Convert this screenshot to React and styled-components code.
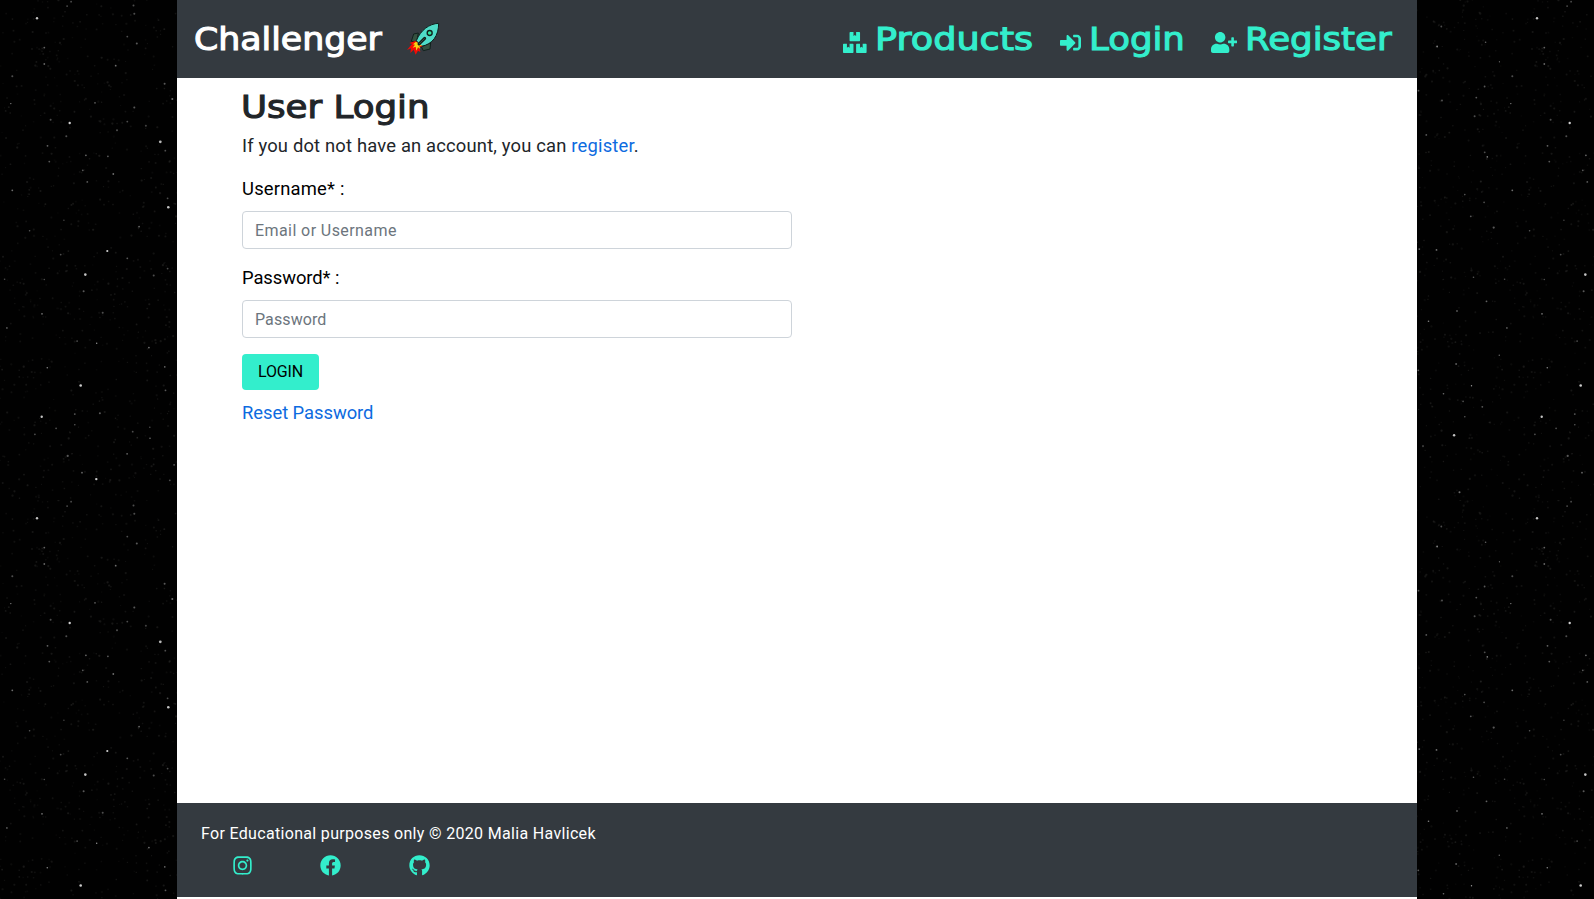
import React from 'react';
import styled, { createGlobalStyle } from 'styled-components';
import { FaBoxes, FaSignInAlt, FaUserPlus, FaInstagram, FaFacebook, FaGithub } from 'react-icons/fa';

const GlobalStyle = createGlobalStyle`
  *, *::before, *::after { box-sizing: border-box; }
  html, body, #root { height: 100%; }
  body {
    margin: 0;
    overflow: hidden;
    background: #000;
    color: #212529;
    font: 18.4px/27px Roboto, "Liberation Sans", sans-serif;
  }
`;

const Sky = styled.svg`
  position: fixed;
  inset: 0;
  width: 100%;
  height: 100%;
  z-index: -1;
`;

const Page = styled.div`
  display: flex;
  flex-direction: column;
  width: 1240px;
  height: 100%;
  margin: 0 auto;
  padding-bottom: 2px;
  background: #fff;
`;

const Header = styled.header`
  display: flex;
  align-items: center;
  justify-content: space-between;
  flex: none;
  height: 78px;
  padding: 0 24px 0 16.5px;
  background: #343a40;
`;

// Wide display lettering for the brand, navigation and page title.
const Display = styled.span`
  display: inline-block;
  font: 32px/38px "DejaVu Sans", sans-serif;
  transform: scaleX(${(p) => p.$stretch});
  transform-origin: left;
  -webkit-text-stroke: 1.1px currentColor;
`;

const Brand = styled.a`
  display: flex;
  align-items: center;
  color: #fff;
`;

const BrandName = styled(Display)`
  width: 212.5px;
`;

const Nav = styled.nav`
  display: grid;
  grid-template-columns: 217px 151px 182px;
`;

const NavLink = styled.a`
  display: flex;
  align-items: center;
  color: #33eecc;

  svg {
    flex: none;
    width: ${(p) => p.$iconWidth}px;
    height: 21px;
    margin: 7px 8px 0 0;
  }
`;

const Main = styled.main`
  flex: 1;
  padding: 10px 65px 0;
`;

const Title = styled.h1`
  display: flex;
  margin: 0 0 6px -1.2px;
  font-weight: 400;
`;

const Intro = styled.p`
  margin: 0 0 16px;
  letter-spacing: 0.17px;
`;

const Link = styled.a`
  color: #0d6be0;
`;

const Form = styled.form`
  width: 550px;
`;

const Field = styled.div`
  display: flex;
  flex-direction: column;
  gap: 9px;
  margin-bottom: ${(p) => p.$gap}px;
`;

const Label = styled.label`
  color: #000;
  letter-spacing: ${(p) => p.$tracking}px;
`;

const Input = styled.input`
  height: 38px;
  padding: 6px 12px;
  border: 1px solid #ced4da;
  border-radius: 4px;
  background: #fff;
  font: 16px/24px Roboto, "Liberation Sans", sans-serif;
  letter-spacing: ${(p) => p.$tracking}px;

  &::placeholder { color: #6c757d; opacity: 1; }
`;

const Button = styled.button`
  display: block;
  width: 77px;
  height: 36px;
  margin-bottom: 9px;
  padding: 0;
  border: 0;
  border-radius: 4px;
  background: #33eecc;
  color: #000;
  font: 16px/24px Roboto, "Liberation Sans", sans-serif;
  letter-spacing: -0.2px;
`;

const Reset = styled(Link)`
  letter-spacing: -0.05px;
`;

const Footer = styled.footer`
  flex: none;
  height: 94px;
  padding: 19px 23px 0 24px;
  background: #343a40;
  color: #fff;
  font-size: 16px;
  line-height: 24px;
  letter-spacing: 0.32px;
`;

const Social = styled.div`
  display: grid;
  grid-template-columns: repeat(3, 88.6px);
  margin-left: -3px;
  padding-top: 8.6px;
`;

const SocialLink = styled.a`
  display: flex;
  justify-content: center;
  color: #33eecc;
`;

// Bright stars of the 500px sky tile: x, y, radius, opacity.
const STARS = [
  [36.7, 18, 1.2, 0.9], [69.4, 122.7, 1.2, 0.95], [160, 141.5, 1.4, 0.85], [168, 207, 1.3, 0.9],
  [107, 250.7, 1.1, 0.95], [85, 274.3, 1.3, 0.9], [80.4, 385.2, 1.3, 0.95], [41.4, 416.4, 1.2, 0.9],
  [96, 478.8, 1.2, 0.95], [453.8, 435, 1.2, 0.9], [133.2, 5.3, 1, 0.35], [134, 13.5, 1, 0.35],
  [66.8, 5.8, 0.9, 0.35], [70.8, 1.4, 0.9, 0.35], [44, 47.3, 0.9, 0.45], [44, 63.7, 0.9, 0.45],
  [12, 76, 1, 0.35], [10.5, 103.3, 0.7, 0.6], [127, 36.3, 0.9, 0.35], [136.5, 43.3, 1, 0.4],
  [115.4, 65.4, 0.9, 0.5], [164.3, 83.5, 1, 0.4], [172, 98.8, 1, 0.5], [94.7, 102.5, 0.9, 0.4],
  [134, 107.3, 1, 0.4], [50.3, 119.5, 1, 0.35], [66, 136, 1, 0.35], [116.7, 130, 1, 0.35],
  [145.6, 125.5, 1, 0.3], [127, 121.3, 0.9, 0.35], [47.2, 145.5, 0.9, 0.45], [49, 161.3, 0.9, 0.4],
  [85.6, 155, 0.9, 0.45], [107.6, 156, 0.9, 0.4], [82.5, 170, 0.9, 0.4], [113, 173.7, 0.9, 0.5],
  [87, 181.6, 0.9, 0.4], [165, 150.4, 0.9, 0.35], [12, 190, 0.9, 0.5], [167.3, 198, 0.9, 0.35],
  [138.8, 226.3, 0.9, 0.45], [29.3, 230.5, 0.8, 0.4], [63.6, 220, 0.8, 0.3], [60.4, 254.3, 0.9, 0.35],
  [127, 258, 0.9, 0.4], [167.3, 268.3, 0.9, 0.35], [153.4, 275.3, 1, 0.35], [4.3, 279, 0.8, 0.35],
  [44, 279.2, 0.8, 0.35], [83.3, 291, 1, 0.4], [41.7, 313.5, 0.9, 0.5], [102.4, 312.4, 1, 0.35],
  [6.6, 327.6, 0.9, 0.4], [76.8, 340.8, 0.9, 0.35], [96.4, 343, 0.7, 0.7], [148.6, 347.3, 0.9, 0.5],
  [47, 367.4, 0.8, 0.6], [164.5, 366.6, 0.8, 0.5], [165.2, 390, 0.9, 0.4], [74.5, 413.8, 0.9, 0.4],
  [99.6, 413, 1, 0.4], [74.5, 424.5, 0.8, 0.4], [55.8, 428, 0.9, 0.35], [34.6, 434, 0.9, 0.35],
  [132.4, 431.4, 0.9, 0.35], [149.5, 427, 0.8, 0.35], [149.7, 438, 0.8, 0.5], [67.4, 455.6, 1.1, 0.4],
  [81.7, 472.4, 0.9, 0.45], [173.8, 464.6, 0.8, 0.45], [169.5, 480, 0.9, 0.35], [126.8, 453.5, 0.9, 0.45],
  [436.8, 46.2, 0.9, 0.6], [485.3, 42, 0.8, 0.45], [441, 26.2, 0.9, 0.35], [499.3, 61.5, 0.8, 0.4],
  [484.3, 86.2, 0.9, 0.4], [476, 97.3, 0.9, 0.4], [418.2, 90.4, 0.9, 0.4], [441.7, 100.3, 1, 0.35],
  [474.3, 116, 1, 0.35], [426, 134.6, 0.9, 0.4], [484.4, 152, 0.9, 0.35], [487, 156.6, 0.8, 0.6],
  [464.5, 194.3, 0.8, 0.4], [483.8, 202, 0.9, 0.35], [470.5, 216, 0.9, 0.4], [493.4, 227.3, 1.1, 0.4],
  [436.2, 249.6, 0.9, 0.5], [419, 248.8, 0.9, 0.45], [473.2, 277, 0.8, 0.4], [486.2, 301, 0.9, 0.45],
  [456.7, 310.7, 0.9, 0.4], [428.2, 321, 0.8, 0.6], [499, 355, 0.8, 0.4], [455.8, 363.6, 1, 0.4],
  [418, 370, 0.9, 0.4], [471.2, 385.5, 0.7, 0.7], [443.2, 393.5, 0.8, 0.5], [462.8, 401, 0.9, 0.35],
  [482, 406.5, 0.9, 0.4], [464.5, 416.5, 0.8, 0.4], [422.7, 445.8, 0.8, 0.45], [459.2, 492, 1, 0.5],
];

// Faint background dust, spread by a small seeded generator.
const DUST = (() => {
  let seed = 7;
  const next = () => (seed = (seed * 16807) % 2147483647) / 2147483647;
  return Array.from({ length: 2200 }, () => [next() * 500, next() * 500, 0.5 + next() * 0.6, 0.03 + next() * 0.08]);
})();

function Starfield() {
  return (
    <Sky aria-hidden="true">
      <defs>
        <pattern id="stars" width="500" height="500" patternUnits="userSpaceOnUse">
          <rect width="500" height="500" fill="#010101" />
          {DUST.map(([x, y, r, o], i) => <circle key={i} cx={x} cy={y} r={r} fill="#d8d6cc" opacity={o} />)}
          {STARS.map(([x, y, r, o], i) => <circle key={i} cx={x + 0.3} cy={y + 0.3} r={r} fill="#fff" opacity={o * 0.85} />)}
        </pattern>
      </defs>
      <rect width="100%" height="100%" fill="url(#stars)" />
    </Sky>
  );
}

function Rocket() {
  return (
    <svg width="34" height="34" viewBox="18 20 102 102" aria-hidden="true">
      <g stroke="#10201c" strokeWidth="3" strokeLinejoin="round">
        <path d="M55 53 L41 56 L34 78 L50 80 Z" fill="#35503f" />
        <path d="M92 82 L90 101 L70 106 L64 94 Z" fill="#35503f" />
        <path d="M116 24 C88 25 62 44 49 76 L64 93 C98 87 116 61 116 24 Z" fill="#4fdcc8" />
        <circle cx="89" cy="53" r="7.5" fill="#2fe49d" strokeWidth="4" />
      </g>
      <path d="M46 77 L28 83 L36 86 L21 104 L33 99 L31 113 L41 103 L47 118 L54 106 L61 110 L58 96 L68 93 Z" fill="#f40b05" />
      <path d="M48 79 L39 87 L45 88 L38 97 L47 94 L49 106 L54 96 L61 101 L58 92 L66 91 Z" fill="#f7d614" />
      <path d="M74 69 L57 86" stroke="#10201c" strokeWidth="9" strokeLinecap="round" />
      <path d="M73 70 L58 85" stroke="#35503f" strokeWidth="3" strokeLinecap="round" />
    </svg>
  );
}

export default function App() {
  return (
    <>
      <GlobalStyle />
      <Starfield />
      <Page>
        <Header>
          <Brand>
            <BrandName $stretch={1.085}>Challenger</BrandName>
            <Rocket />
          </Brand>
          <Nav>
            <NavLink $iconWidth={23.6}><FaBoxes /><Display $stretch={1.145}>Products</Display></NavLink>
            <NavLink $iconWidth={21}><FaSignInAlt /><Display $stretch={1.11}>Login</Display></NavLink>
            <NavLink $iconWidth={26.2}><FaUserPlus /><Display $stretch={1.113}>Register</Display></NavLink>
          </Nav>
        </Header>
        <Main>
          <Title><Display $stretch={1.113}>User Login</Display></Title>
          <Intro>If you dot not have an account, you can <Link>register</Link>.</Intro>
          <Form>
            <Field $gap={15}>
              <Label htmlFor="username" $tracking={0.2}>Username* :</Label>
              <Input id="username" placeholder="Email or Username" $tracking={0.42} />
            </Field>
            <Field $gap={16}>
              <Label htmlFor="password" $tracking={-0.08}>Password* :</Label>
              <Input id="password" type="password" placeholder="Password" $tracking={0.1} />
            </Field>
            <Button type="button">LOGIN</Button>
            <Reset>Reset Password</Reset>
          </Form>
        </Main>
        <Footer>
          For Educational purposes only © 2020 Malia Havlicek
          <Social>
            <SocialLink><FaInstagram size={21} /></SocialLink>
            <SocialLink><FaFacebook size={21} /></SocialLink>
            <SocialLink><FaGithub size={21} /></SocialLink>
          </Social>
        </Footer>
      </Page>
    </>
  );
}
